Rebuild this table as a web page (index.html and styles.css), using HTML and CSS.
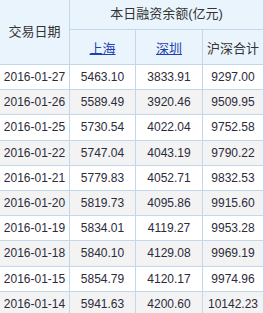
FILE: index.html
```html
<!DOCTYPE html>
<html>
<head>
<meta charset="utf-8">
<link rel="stylesheet" href="styles.css">
</head>
<body>
<table class="grid">
  <colgroup>
    <col class="c-date">
    <col class="c-sh">
    <col class="c-sz">
    <col class="c-sum">
  </colgroup>
  <thead>
    <tr class="h1">
      <th rowspan="2">交易日期</th>
      <th colspan="3">本日融资余额(亿元)</th>
    </tr>
    <tr class="h2">
      <th><a href="#">上海</a></th>
      <th><a href="#">深圳</a></th>
      <th>沪深合计</th>
    </tr>
  </thead>
  <tbody>
    <tr><td>2016-01-27</td><td>5463.10</td><td>3833.91</td><td>9297.00</td></tr>
    <tr><td>2016-01-26</td><td>5589.49</td><td>3920.46</td><td>9509.95</td></tr>
    <tr><td>2016-01-25</td><td>5730.54</td><td>4022.04</td><td>9752.58</td></tr>
    <tr><td>2016-01-22</td><td>5747.04</td><td>4043.19</td><td>9790.22</td></tr>
    <tr><td>2016-01-21</td><td>5779.83</td><td>4052.71</td><td>9832.53</td></tr>
    <tr><td>2016-01-20</td><td>5819.73</td><td>4095.86</td><td>9915.60</td></tr>
    <tr><td>2016-01-19</td><td>5834.01</td><td>4119.27</td><td>9953.28</td></tr>
    <tr><td>2016-01-18</td><td>5840.10</td><td>4129.08</td><td>9969.19</td></tr>
    <tr><td>2016-01-15</td><td>5854.79</td><td>4120.17</td><td>9974.96</td></tr>
    <tr><td>2016-01-14</td><td>5941.63</td><td>4200.60</td><td>10142.23</td></tr>
  </tbody>
</table>
</body>
</html>
```
FILE: styles.css
```css
html, body {
  margin: 0;
  padding: 0;
  background: #ffffff;
}
body {
  font-family: "Liberation Sans", Arial, "Noto Sans CJK SC", sans-serif;
  font-size: 12px;
  color: #333333;
  overflow: hidden;
}
.grid {
  border-collapse: collapse;
  table-layout: fixed;
  width: 264px;
  margin-top: -5px;
  margin-left: -1px;
}
.c-date { width: 70px; }
.c-sh { width: 66px; }
.c-sz { width: 67px; }
.c-sum { width: 61px; }
.grid th, .grid td {
  border: 1px solid #c3d7eb;
  padding: 0;
  text-align: center;
  white-space: nowrap;
  overflow: hidden;
}
.grid th {
  background: #eaf4fd;
  font-weight: normal;
  font-size: 13px;
  color: #333333;
}
.h1 th { height: 33px; }
.h2 th { height: 34px; }
.grid td {
  height: 24.2px;
  font-size: 12px;
  color: #2b2b3a;
}
.grid tbody tr:nth-child(even) td {
  background: #f3f3f3;
}
.grid a {
  color: #1d3fb0;
  text-decoration: underline;
}
```
